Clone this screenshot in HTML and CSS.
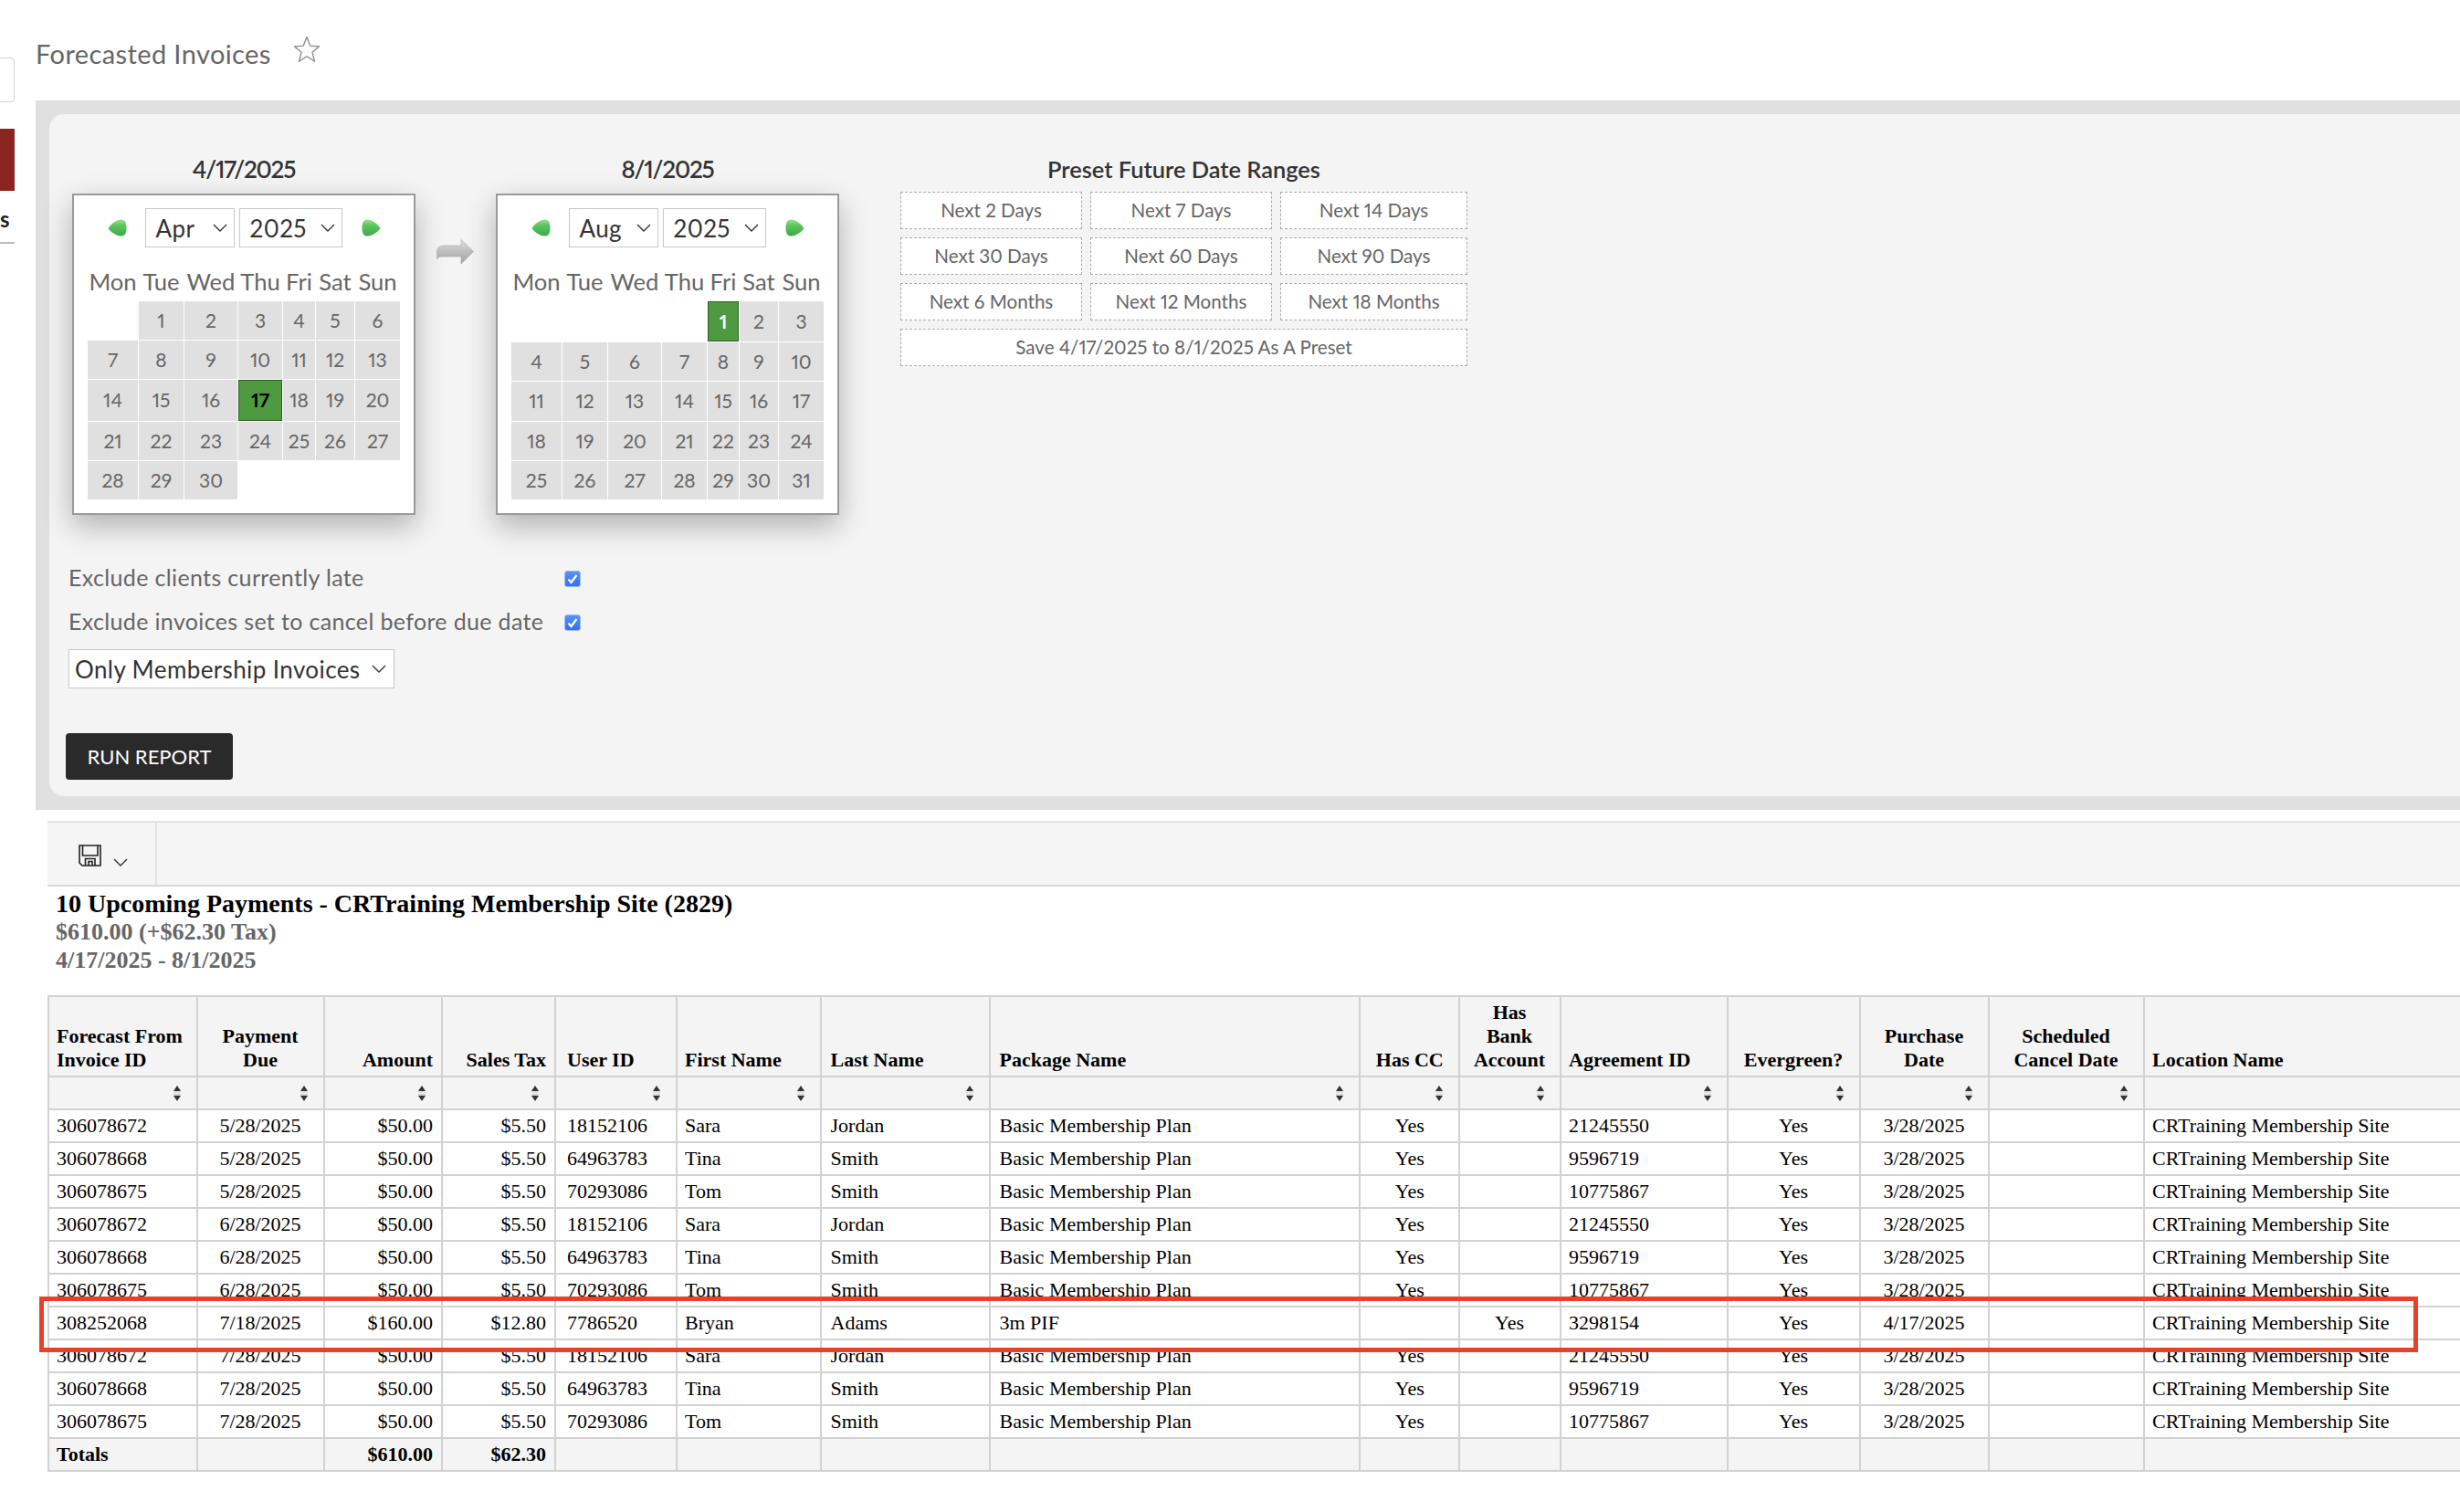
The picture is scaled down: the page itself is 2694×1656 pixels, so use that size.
FILE: index.html
```html
<!DOCTYPE html>
<html lang="en">
<head>
<meta charset="utf-8">
<title>Forecasted Invoices</title>
<link rel="stylesheet" href="styles.css">
</head>
<body>
<svg class="defs" aria-hidden="true">
  <defs>
    <linearGradient id="gl" x1="0" y1="0" x2="0" y2="1"><stop offset="0" stop-color="#9be096"/><stop offset=".35" stop-color="#5cc65c"/><stop offset="1" stop-color="#3fa84a"/></linearGradient>
    <linearGradient id="ga" x1="0" y1="0" x2="0" y2="1"><stop offset="0" stop-color="#dedede"/><stop offset=".5" stop-color="#bdbdbd"/><stop offset="1" stop-color="#a4a4a4"/></linearGradient>
    <linearGradient id="gc" x1="0" y1="0" x2="0" y2="1"><stop offset="0" stop-color="#5a93f6"/><stop offset="1" stop-color="#3470ee"/></linearGradient>
    <symbol id="chev" viewBox="0 0 16 9"><path d="M1 1l7 7 7-7" fill="none" stroke="#333" stroke-width="1.400"/></symbol>
    <symbol id="sort" viewBox="0 0 10 17"><path d="M5 0L9 6H1z" fill="#333"/><rect x="1" y="6.500" width="8" height="1.300" fill="#d4d4d4"/><rect x="1" y="9.300" width="8" height="1.300" fill="#c4c4c4"/><path d="M5 17L9 11H1z" fill="#333"/></symbol>
    <symbol id="prev" viewBox="0 0 21 19"><path d="M0.500 10C3.500 5 9.500 0.500 15 0.500C19 0.500 20.500 4 20.500 9.500C20.500 15 19 18.500 15 18.500C9.500 18.500 3.500 14.500 0.500 10Z" fill="url(#gl)"/></symbol>
    <symbol id="next" viewBox="0 0 21 19"><path d="M20.500 10C17.500 5 11.500 0.500 6 0.500C2 0.500 0.500 4 0.500 9.500C0.500 15 2 18.500 6 18.500C11.500 18.500 17.500 14.500 20.500 10Z" fill="url(#gl)"/></symbol>
    <symbol id="check" viewBox="0 0 18 18"><rect x=".5" y=".5" width="17" height="17" rx="2.500" fill="url(#gc)" stroke="#9dbdf8"/><path d="M4.500 9.500l3 3.500 6-8" fill="none" stroke="#fff" stroke-width="2.200"/></symbol>
  </defs>
</svg>

<div class="page">
  <aside class="side">
    <div class="side-box"></div>
    <div class="side-red"></div>
    <div class="side-text">s</div>
  </aside>

  <main class="main">
    <header class="title-row">
      <h1 class="page-title">Forecasted Invoices</h1>
      <svg class="star" viewBox="0 0 30 30"><path d="M15 1.500l3.700 9.600 10 .7-7.700 6.500 2.500 10L15 22.800l-8.500 5.500 2.500-10-7.700-6.500 10-.7z" fill="#fbfbfb" stroke="#8a8a8a" stroke-width="1.300" stroke-linejoin="round"/></svg>
    </header>

    <section class="panel">
      <div class="panel-in">
        <div class="pickers">
          <div class="pick">
            <div class="pick-date">4/17/2025</div>
            <div class="cal">
              <div class="cal-nav">
                <svg class="nav-ic"><use href="#prev"/></svg>
                <div class="sel sel-m"><span>Apr</span><svg class="chev"><use href="#chev"/></svg></div>
                <div class="sel sel-y"><span>2025</span><svg class="chev"><use href="#chev"/></svg></div>
                <svg class="nav-ic"><use href="#next"/></svg>
              </div>
              <div class="days days-a">
                <div class="wd">Mon</div><div class="wd">Tue</div><div class="wd">Wed</div><div class="wd">Thu</div><div class="wd">Fri</div><div class="wd">Sat</div><div class="wd">Sun</div>
                <div class="none"></div><div class="d">1</div><div class="d">2</div><div class="d">3</div><div class="d">4</div><div class="d">5</div><div class="d">6</div>
                <div class="d">7</div><div class="d">8</div><div class="d">9</div><div class="d">10</div><div class="d">11</div><div class="d">12</div><div class="d">13</div>
                <div class="d">14</div><div class="d">15</div><div class="d">16</div><div class="d on on-dark">17</div><div class="d">18</div><div class="d">19</div><div class="d">20</div>
                <div class="d">21</div><div class="d">22</div><div class="d">23</div><div class="d">24</div><div class="d">25</div><div class="d">26</div><div class="d">27</div>
                <div class="d">28</div><div class="d">29</div><div class="d">30</div>
              </div>
            </div>
          </div>

          <div class="to-arrow">
            <svg class="arrow" viewBox="0 0 41 28"><path d="M0.500 22V14C0.500 9 3 7 8 7H27V0.500L40.500 13.500L27 27V19H6C3 19 1 20 0.500 22Z" fill="url(#ga)" stroke="#aaa" stroke-width=".6"/></svg>
          </div>

          <div class="pick">
            <div class="pick-date">8/1/2025</div>
            <div class="cal">
              <div class="cal-nav">
                <svg class="nav-ic"><use href="#prev"/></svg>
                <div class="sel sel-m"><span>Aug</span><svg class="chev"><use href="#chev"/></svg></div>
                <div class="sel sel-y"><span>2025</span><svg class="chev"><use href="#chev"/></svg></div>
                <svg class="nav-ic"><use href="#next"/></svg>
              </div>
              <div class="days days-b">
                <div class="wd">Mon</div><div class="wd">Tue</div><div class="wd">Wed</div><div class="wd">Thu</div><div class="wd">Fri</div><div class="wd">Sat</div><div class="wd">Sun</div>
                <div class="none"></div><div class="none"></div><div class="none"></div><div class="none"></div><div class="d on on-light">1</div><div class="d">2</div><div class="d">3</div>
                <div class="d">4</div><div class="d">5</div><div class="d">6</div><div class="d">7</div><div class="d">8</div><div class="d">9</div><div class="d">10</div>
                <div class="d">11</div><div class="d">12</div><div class="d">13</div><div class="d">14</div><div class="d">15</div><div class="d">16</div><div class="d">17</div>
                <div class="d">18</div><div class="d">19</div><div class="d">20</div><div class="d">21</div><div class="d">22</div><div class="d">23</div><div class="d">24</div>
                <div class="d">25</div><div class="d">26</div><div class="d">27</div><div class="d">28</div><div class="d">29</div><div class="d">30</div><div class="d">31</div>
              </div>
            </div>
          </div>

          <div class="presets">
            <div class="pick-date preset-head">Preset Future Date Ranges</div>
            <div class="preset-grid">
              <div class="pbtn">Next 2 Days</div><div class="pbtn">Next 7 Days</div><div class="pbtn">Next 14 Days</div>
              <div class="pbtn">Next 30 Days</div><div class="pbtn">Next 60 Days</div><div class="pbtn">Next 90 Days</div>
              <div class="pbtn">Next 6 Months</div><div class="pbtn">Next 12 Months</div><div class="pbtn">Next 18 Months</div>
              <div class="pbtn pbtn-wide">Save 4/17/2025 to 8/1/2025 As A Preset</div>
            </div>
          </div>
        </div>

        <div class="opts">
          <div class="opt"><span>Exclude clients currently late</span><svg class="chk"><use href="#check"/></svg></div>
          <div class="opt"><span>Exclude invoices set to cancel before due date</span><svg class="chk"><use href="#check"/></svg></div>
          <div class="sel sel-only"><span>Only Membership Invoices</span><svg class="chev"><use href="#chev"/></svg></div>
          <button class="run" type="button">RUN REPORT</button>
        </div>
      </div>
    </section>

    <section class="report">
      <div class="toolbar">
        <div class="tool">
          <svg class="save" viewBox="0 0 25 24"><path d="M1 1H24V23H4L1 20ZM4.500 1V12H21V1M7.500 23V15.500H18V23M11 23V18.500H15V23" fill="none" stroke="#222" stroke-width="1.600"/></svg>
          <svg class="chev"><use href="#chev"/></svg>
        </div>
      </div>
      <div class="rpt-head">
        <div class="rpt-title">10 Upcoming Payments - CRTraining Membership Site (2829)</div>
        <div class="rpt-sub">$610.00 (+$62.30 Tax)</div>
        <div class="rpt-sub">4/17/2025 - 8/1/2025</div>
      </div>

      <div class="table-wrap">
        <table class="grid">
          <colgroup><col><col><col><col><col><col><col><col><col><col><col><col><col><col><col></colgroup>
          <thead>
            <tr class="hd">
              <th>Forecast From<br>Invoice ID</th><th>Payment<br>Due</th><th>Amount</th><th>Sales Tax</th><th>User ID</th><th>First Name</th><th>Last Name</th><th>Package Name</th><th>Has CC</th><th>Has<br>Bank<br>Account</th><th>Agreement ID</th><th>Evergreen?</th><th>Purchase<br>Date</th><th>Scheduled<br>Cancel Date</th><th>Location Name</th>
            </tr>
            <tr class="flt">
              <th><svg class="sort"><use href="#sort"/></svg></th><th><svg class="sort"><use href="#sort"/></svg></th><th><svg class="sort"><use href="#sort"/></svg></th><th><svg class="sort"><use href="#sort"/></svg></th><th><svg class="sort"><use href="#sort"/></svg></th><th><svg class="sort"><use href="#sort"/></svg></th><th><svg class="sort"><use href="#sort"/></svg></th><th><svg class="sort"><use href="#sort"/></svg></th><th><svg class="sort"><use href="#sort"/></svg></th><th><svg class="sort"><use href="#sort"/></svg></th><th><svg class="sort"><use href="#sort"/></svg></th><th><svg class="sort"><use href="#sort"/></svg></th><th><svg class="sort"><use href="#sort"/></svg></th><th><svg class="sort"><use href="#sort"/></svg></th><th></th>
            </tr>
          </thead>
          <tbody>
            <tr><td>306078672</td><td>5/28/2025</td><td>$50.00</td><td>$5.50</td><td>18152106</td><td>Sara</td><td>Jordan</td><td>Basic Membership Plan</td><td>Yes</td><td></td><td>21245550</td><td>Yes</td><td>3/28/2025</td><td></td><td>CRTraining Membership Site</td></tr>
            <tr><td>306078668</td><td>5/28/2025</td><td>$50.00</td><td>$5.50</td><td>64963783</td><td>Tina</td><td>Smith</td><td>Basic Membership Plan</td><td>Yes</td><td></td><td>9596719</td><td>Yes</td><td>3/28/2025</td><td></td><td>CRTraining Membership Site</td></tr>
            <tr><td>306078675</td><td>5/28/2025</td><td>$50.00</td><td>$5.50</td><td>70293086</td><td>Tom</td><td>Smith</td><td>Basic Membership Plan</td><td>Yes</td><td></td><td>10775867</td><td>Yes</td><td>3/28/2025</td><td></td><td>CRTraining Membership Site</td></tr>
            <tr><td>306078672</td><td>6/28/2025</td><td>$50.00</td><td>$5.50</td><td>18152106</td><td>Sara</td><td>Jordan</td><td>Basic Membership Plan</td><td>Yes</td><td></td><td>21245550</td><td>Yes</td><td>3/28/2025</td><td></td><td>CRTraining Membership Site</td></tr>
            <tr><td>306078668</td><td>6/28/2025</td><td>$50.00</td><td>$5.50</td><td>64963783</td><td>Tina</td><td>Smith</td><td>Basic Membership Plan</td><td>Yes</td><td></td><td>9596719</td><td>Yes</td><td>3/28/2025</td><td></td><td>CRTraining Membership Site</td></tr>
            <tr><td>306078675</td><td>6/28/2025</td><td>$50.00</td><td>$5.50</td><td>70293086</td><td>Tom</td><td>Smith</td><td>Basic Membership Plan</td><td>Yes</td><td></td><td>10775867</td><td>Yes</td><td>3/28/2025</td><td></td><td>CRTraining Membership Site</td></tr>
            <tr><td>308252068</td><td>7/18/2025</td><td>$160.00</td><td>$12.80</td><td>7786520</td><td>Bryan</td><td>Adams</td><td>3m PIF</td><td></td><td>Yes</td><td>3298154</td><td>Yes</td><td>4/17/2025</td><td></td><td>CRTraining Membership Site</td></tr>
            <tr><td>306078672</td><td>7/28/2025</td><td>$50.00</td><td>$5.50</td><td>18152106</td><td>Sara</td><td>Jordan</td><td>Basic Membership Plan</td><td>Yes</td><td></td><td>21245550</td><td>Yes</td><td>3/28/2025</td><td></td><td>CRTraining Membership Site</td></tr>
            <tr><td>306078668</td><td>7/28/2025</td><td>$50.00</td><td>$5.50</td><td>64963783</td><td>Tina</td><td>Smith</td><td>Basic Membership Plan</td><td>Yes</td><td></td><td>9596719</td><td>Yes</td><td>3/28/2025</td><td></td><td>CRTraining Membership Site</td></tr>
            <tr><td>306078675</td><td>7/28/2025</td><td>$50.00</td><td>$5.50</td><td>70293086</td><td>Tom</td><td>Smith</td><td>Basic Membership Plan</td><td>Yes</td><td></td><td>10775867</td><td>Yes</td><td>3/28/2025</td><td></td><td>CRTraining Membership Site</td></tr>
          </tbody>
          <tfoot>
            <tr><td>Totals</td><td></td><td>$610.00</td><td>$62.30</td><td></td><td></td><td></td><td></td><td></td><td></td><td></td><td></td><td></td><td></td><td></td></tr>
          </tfoot>
        </table>
        <div class="mark"></div>
      </div>
    </section>
  </main>
</div>
</body>
</html>
```
FILE: styles.css
```css
* { box-sizing: border-box; }
html, body { margin: 0; padding: 0; background: #fff; overflow: hidden; }
body { width: 2694px; height: 1656px; font-family: "Lato", "Liberation Sans", sans-serif; font-variant-numeric: proportional-nums; color: #666; }
.defs { position: absolute; width: 0; height: 0; }

.page { display: flex; align-items: flex-start; }

/* clipped sidebar */
.side { width: 16px; flex: none; padding-top: 63px; overflow: hidden; }
.side-box { height: 49px; width: 30px; margin-left: -14px; border: 1.5px solid #d2d2d2; border-radius: 4px; }
.side-red { height: 68px; margin-top: 29px; background: #8a2420; }
.side-text { height: 42px; margin-top: 16px; border-bottom: 2px solid #bbb; font-weight: 700; font-size: 24px; line-height: 30px; color: #222; text-align: left; }

.main { width: 2655px; flex: none; margin-left: 23px; }

.title-row { display: flex; align-items: flex-start; height: 110px; padding-top: 39px; }
.page-title { margin: 0; font-size: 29px; font-weight: 400; line-height: 40px; letter-spacing: .4px; color: #666; }
.star { width: 30px; height: 30px; margin-left: 24px; }

.panel { background: #e0e0e0; padding: 15px 0 15px 15px; }
.panel-in { background: #f4f4f4; border-radius: 16px 0 0 16px; height: 747px; padding: 45px 0 0 25px; }

.pickers { display: flex; align-items: flex-start; }
.pick { width: 376px; flex: none; }
.pick-date { height: 30px; margin-bottom: 12px; text-align: center; font-size: 26px; line-height: 30px; font-weight: 600; letter-spacing: -1.2px; color: #333; }
.cal { height: 352px; padding-top: 14px; background: #fff; border: 2px solid #9a9a9a; box-shadow: 0 12px 30px rgba(0,0,0,.28); }
.cal-nav { display: flex; align-items: center; justify-content: center; height: 43px; margin-bottom: 22px; }
.nav-ic { width: 21px; height: 19px; }
.sel { display: flex; align-items: center; justify-content: space-between; height: 43px; background: #fff; border: 1.7px solid #c8c8c8; font-size: 26px; letter-spacing: .4px; color: #333; }
.chev { width: 16px; height: 9px; flex: none; }
.sel-m { width: 98px; margin: 0 5px 0 20px; padding: 0 7px 0 11px; }
.sel-y { width: 113px; margin: 0 21px 0 0; padding: 0 7px 0 11px; }

.days { display: grid; gap: 1px; margin: 0 15px; }
.days-a { grid-template-columns: 55px 49px 58px 48px 35px 42px 49px; grid-template-rows: 36px 42px 42px 45px 42px 42px; }
.days-b { grid-template-columns: 55px 49px 58px 49px 34px 42px 49px; grid-template-rows: 36px 44px 42px 43px 42px 42px; }
.wd { height: 30px; line-height: 30px; font-size: 25.6px; color: #666; white-space: nowrap; display: flex; justify-content: center; }
.d { display: flex; align-items: center; justify-content: center; padding-bottom: 2px; background: #e0e0e0; font-size: 21px; color: #666; }
.on { background: #4f9a40; border: 1.5px solid #2c5c24; font-weight: 700; }
.on-dark { color: #000; }
.on-light { color: #fff; }

.to-arrow { width: 88px; flex: none; padding: 92px 0 0 23px; }
.arrow { display: block; width: 41px; height: 28px; }

.presets { width: 621px; flex: none; margin-left: 67px; }
.preset-head { margin-bottom: 10px; font-size: 25.4px; letter-spacing: 0; }
.preset-grid { display: grid; grid-template-columns: 199px 199px 205px; grid-auto-rows: 41px; gap: 9px; }
.pbtn { display: flex; align-items: center; justify-content: center; padding-bottom: 2px; background: #fff; border: 1.7px dashed #ababab; font-size: 20.6px; color: #666; }
.pbtn-wide { grid-column: 1 / -1; }

.opts { margin: 54px 0 0 -4px; display: flex; flex-direction: column; align-items: flex-start; }
.opt { display: flex; align-items: center; height: 30px; margin-bottom: 18px; font-size: 25px; letter-spacing: .35px; color: #666; }
.opt span { width: 543px; margin-top: -2px; }
.chk { width: 18px; height: 18px; margin-top: 2px; }
.sel-only { width: 357px; margin-top: -3px; padding: 0 8px 0 6px; }
.run { margin: 49px 0 0 -3px; width: 183px; height: 51px; padding: 0; background: #2a2a2a; border: 0; border-radius: 4px; color: #fff; font-family: inherit; font-size: 22px; }

.report { margin-top: 12px; }
.toolbar { height: 72px; margin-left: 13px; background: #f5f5f5; border-top: 2px solid #e2e2e2; border-bottom: 2px solid #d8d8d8; }
.tool { display: flex; align-items: flex-start; width: 120px; height: 100%; padding: 24px 0 0 34px; border-right: 2px solid #e2e2e2; }
.save { width: 25px; height: 24px; }
.tool .chev { margin: 15px 0 0 13px; }

.rpt-head { padding: 3px 0 0 22px; font-family: "Liberation Serif", serif; font-weight: 700; }
.rpt-title { font-size: 28px; line-height: 31px; color: #000; }
.rpt-sub { font-size: 26px; line-height: 31px; color: #666; }

.table-wrap { position: relative; margin: 23px 0 0 13px; width: 2642px; }
.grid { border-collapse: collapse; table-layout: fixed; width: 2695px; font-family: "Liberation Serif", serif; font-size: 22px; color: #000; }
.grid col:nth-child(1) { width: 163px; }
.grid col:nth-child(2) { width: 139px; }
.grid col:nth-child(3) { width: 129px; }
.grid col:nth-child(4) { width: 124px; }
.grid col:nth-child(5) { width: 133px; }
.grid col:nth-child(6) { width: 158px; }
.grid col:nth-child(7) { width: 185px; }
.grid col:nth-child(8) { width: 405px; }
.grid col:nth-child(9) { width: 109px; }
.grid col:nth-child(10) { width: 111px; }
.grid col:nth-child(11) { width: 183px; }
.grid col:nth-child(12) { width: 145px; }
.grid col:nth-child(13) { width: 141px; }
.grid col:nth-child(14) { width: 170px; }
.grid col:nth-child(15) { width: 400px; }
.grid th, .grid td { border: 2px solid #d2d2d2; padding: 0 9px 0 8px; line-height: 26px; }
.grid th { text-align: left; font-weight: 700; vertical-align: bottom; background: #f4f4f4; }
.grid td { height: 36px; white-space: nowrap; }
.grid th:nth-child(5), .grid td:nth-child(5) { padding-left: 12px; }
.grid th:nth-child(7), .grid td:nth-child(7), .grid th:nth-child(8), .grid td:nth-child(8) { padding-left: 9.500px; }
.grid td:nth-child(9), .grid th:nth-child(9) { padding-left: 9.500px; }
.grid .hd th { height: 88px; padding-top: 4px; padding-bottom: 4px; }
.grid .flt th { height: 36px; padding: 0 16px 0 0; text-align: right; vertical-align: middle; }
.grid tfoot td { background: #f4f4f4; font-weight: 700; }

.grid .hd th:nth-child(2), .grid .hd th:nth-child(9), .grid .hd th:nth-child(10), .grid .hd th:nth-child(12), .grid .hd th:nth-child(13), .grid .hd th:nth-child(14) { text-align: center; }
.grid .hd th:nth-child(3), .grid .hd th:nth-child(4) { text-align: right; }
.grid td:nth-child(2), .grid td:nth-child(9), .grid td:nth-child(10), .grid td:nth-child(12), .grid td:nth-child(13) { text-align: center; }
.grid td:nth-child(3), .grid td:nth-child(4) { text-align: right; }

.sort { display: block; width: 10px; height: 17px; margin-left: auto; }

.mark { position: absolute; left: -9px; top: 330px; width: 2605px; height: 61px; border: 5px solid #e8412a; }
```
